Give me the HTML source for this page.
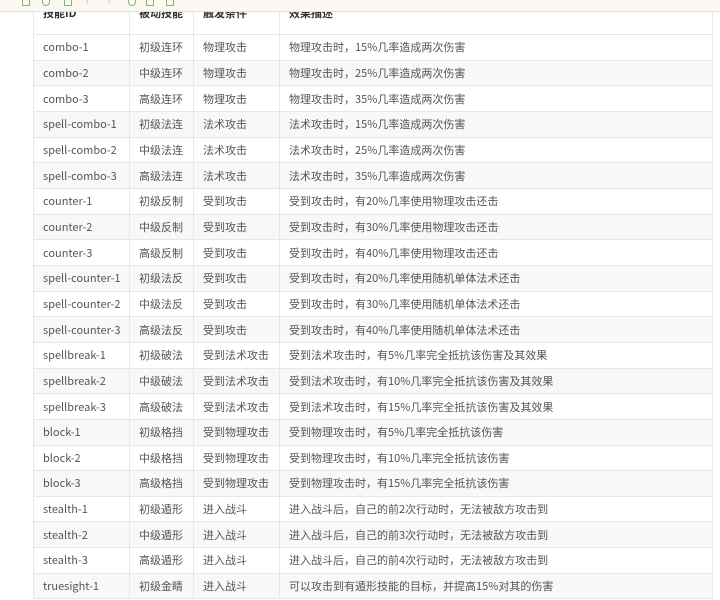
<!DOCTYPE html>
<html><head><meta charset="utf-8"><style>
*{margin:0;padding:0;box-sizing:border-box}
body{width:720px;height:600px;overflow:hidden;background:#fff;position:relative;font-family:"Noto Sans CJK SC","Liberation Sans",sans-serif;font-size:11px;color:#555}
.tb{position:absolute;left:0;top:0;width:720px;height:12px;background:#fbf9f1;border-bottom:1px solid #e6e2d2}
.tb i{position:absolute;top:0;width:8px;height:6px;border:1px solid #7cb87c;border-top:none}
table{position:absolute;left:33px;top:-8px;width:680px;border-collapse:collapse;table-layout:fixed}
td,th{border:1px solid #e4e7eb;padding:0 0 0 9px;white-space:nowrap;overflow:hidden;text-align:left;line-height:14px;vertical-align:middle}
th{height:42px;font-weight:bold;color:#333;vertical-align:top;padding-top:13px}
td{height:25.67px}
tr:nth-child(odd) td{background:#f6f8fa}
</style></head><body>
<table>
<colgroup><col style="width:96px"><col style="width:64px"><col style="width:86px"><col></colgroup>
<tr><th>技能ID</th><th>被动技能</th><th>触发条件</th><th>效果描述</th></tr>
<tr><td>combo-1</td><td>初级连环</td><td>物理攻击</td><td>物理攻击时，15%几率造成两次伤害</td></tr>
<tr><td>combo-2</td><td>中级连环</td><td>物理攻击</td><td>物理攻击时，25%几率造成两次伤害</td></tr>
<tr><td>combo-3</td><td>高级连环</td><td>物理攻击</td><td>物理攻击时，35%几率造成两次伤害</td></tr>
<tr><td>spell-combo-1</td><td>初级法连</td><td>法术攻击</td><td>法术攻击时，15%几率造成两次伤害</td></tr>
<tr><td>spell-combo-2</td><td>中级法连</td><td>法术攻击</td><td>法术攻击时，25%几率造成两次伤害</td></tr>
<tr><td>spell-combo-3</td><td>高级法连</td><td>法术攻击</td><td>法术攻击时，35%几率造成两次伤害</td></tr>
<tr><td>counter-1</td><td>初级反制</td><td>受到攻击</td><td>受到攻击时，有20%几率使用物理攻击还击</td></tr>
<tr><td>counter-2</td><td>中级反制</td><td>受到攻击</td><td>受到攻击时，有30%几率使用物理攻击还击</td></tr>
<tr><td>counter-3</td><td>高级反制</td><td>受到攻击</td><td>受到攻击时，有40%几率使用物理攻击还击</td></tr>
<tr><td>spell-counter-1</td><td>初级法反</td><td>受到攻击</td><td>受到攻击时，有20%几率使用随机单体法术还击</td></tr>
<tr><td>spell-counter-2</td><td>中级法反</td><td>受到攻击</td><td>受到攻击时，有30%几率使用随机单体法术还击</td></tr>
<tr><td>spell-counter-3</td><td>高级法反</td><td>受到攻击</td><td>受到攻击时，有40%几率使用随机单体法术还击</td></tr>
<tr><td>spellbreak-1</td><td>初级破法</td><td>受到法术攻击</td><td>受到法术攻击时，有5%几率完全抵抗该伤害及其效果</td></tr>
<tr><td>spellbreak-2</td><td>中级破法</td><td>受到法术攻击</td><td>受到法术攻击时，有10%几率完全抵抗该伤害及其效果</td></tr>
<tr><td>spellbreak-3</td><td>高级破法</td><td>受到法术攻击</td><td>受到法术攻击时，有15%几率完全抵抗该伤害及其效果</td></tr>
<tr><td>block-1</td><td>初级格挡</td><td>受到物理攻击</td><td>受到物理攻击时，有5%几率完全抵抗该伤害</td></tr>
<tr><td>block-2</td><td>中级格挡</td><td>受到物理攻击</td><td>受到物理攻击时，有10%几率完全抵抗该伤害</td></tr>
<tr><td>block-3</td><td>高级格挡</td><td>受到物理攻击</td><td>受到物理攻击时，有15%几率完全抵抗该伤害</td></tr>
<tr><td>stealth-1</td><td>初级遁形</td><td>进入战斗</td><td>进入战斗后，自己的前2次行动时，无法被敌方攻击到</td></tr>
<tr><td>stealth-2</td><td>中级遁形</td><td>进入战斗</td><td>进入战斗后，自己的前3次行动时，无法被敌方攻击到</td></tr>
<tr><td>stealth-3</td><td>高级遁形</td><td>进入战斗</td><td>进入战斗后，自己的前4次行动时，无法被敌方攻击到</td></tr>
<tr><td>truesight-1</td><td>初级金睛</td><td>进入战斗</td><td>可以攻击到有遁形技能的目标，并提高15%对其的伤害</td></tr>
</table>
<div class="tb">
<i style="left:22px"></i><i style="left:42px;border-radius:0 0 4px 4px"></i><i style="left:64px"></i><i style="left:86px;border:none;color:#7cb87c;font-style:normal;font-size:8px;top:-4px">‹</i><i style="left:108px;border:none;color:#7cb87c;font-style:normal;font-size:8px;top:-4px">›</i><i style="left:128px;border-radius:0 0 4px 4px"></i><i style="left:146px"></i><i style="left:166px"></i>
</div>
</body></html>
